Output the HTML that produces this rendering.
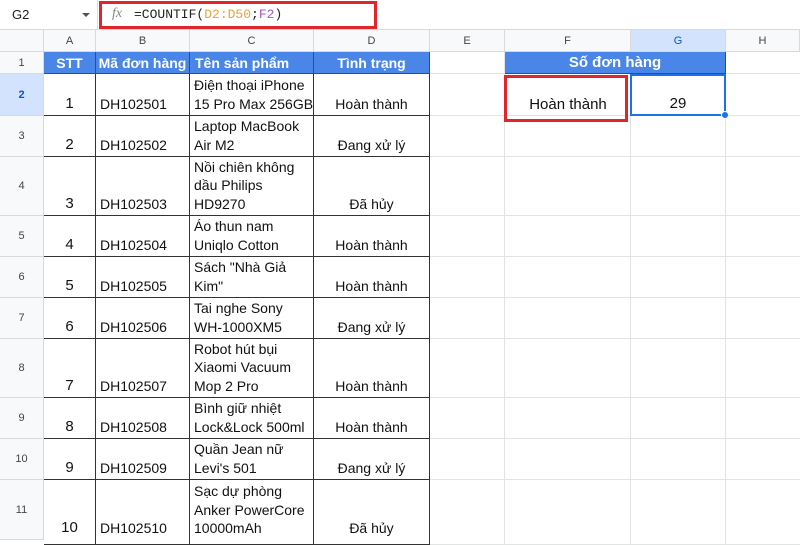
<!DOCTYPE html>
<html><head><meta charset="utf-8"><style>
*{margin:0;padding:0;box-sizing:border-box}
body{width:800px;height:533px;overflow:hidden;background:#fff;font-family:"Liberation Sans",sans-serif;position:relative}
.a{position:absolute}
.hd{position:absolute;background:#f8f9fa;color:#444;font-size:11px;display:flex;align-items:center;justify-content:center;border-right:1px solid #d9d9d9;border-bottom:1px solid #d9d9d9}
.c{position:absolute;font-size:14px;color:#111;display:flex;flex-direction:column;justify-content:flex-end;padding:0 4px 2px;line-height:18.5px;border-right:1px solid #333;border-bottom:1px solid #333;overflow:hidden;white-space:nowrap}
.ctr{align-items:center;text-align:center}
.g{position:absolute;border-right:1px solid #e2e3e3;border-bottom:1px solid #e2e3e3}
.h{position:absolute;background:#4a86e8;color:#fff;font-weight:bold;font-size:14px;display:flex;align-items:center;justify-content:center;border-right:1px solid #2a4f8a;border-bottom:1px solid #2a4f8a}
</style></head><body>
<div class="a" style="left:0;top:0;width:800px;height:30px;background:#fff;border-bottom:1px solid #d9d9d9"></div>
<div class="a" style="left:12px;top:7px;font-size:13px;color:#222">G2</div>
<div class="a" style="left:82px;top:13px;width:0;height:0;border-left:4px solid transparent;border-right:4px solid transparent;border-top:4px solid #555"></div>
<div class="a" style="left:97px;top:0px;width:1px;height:30px;background:#ddd"></div>
<div class="a" style="left:99px;top:1px;width:278px;height:28px;border:3px solid #e0262b"></div>
<div class="a" style="left:112px;top:6px;font-family:'Liberation Serif',serif;font-style:italic;font-size:14px;color:#888">fx</div>
<div class="a" style="left:134px;top:7px;font-family:'Liberation Mono',monospace;font-size:13px;color:#222">=COUNTIF(<span style="color:#e8a33a">D2:D50</span>;<span style="color:#a855c7">F2</span>)</div>
<div class="hd" style="left:0;top:30px;width:44px;height:22px;background:#f8f9fa"></div>
<div class="hd" style="left:44px;top:30px;width:52px;height:22px">A</div>
<div class="hd" style="left:96px;top:30px;width:94px;height:22px">B</div>
<div class="hd" style="left:190px;top:30px;width:124px;height:22px">C</div>
<div class="hd" style="left:314px;top:30px;width:116px;height:22px">D</div>
<div class="hd" style="left:430px;top:30px;width:75px;height:22px">E</div>
<div class="hd" style="left:505px;top:30px;width:126px;height:22px">F</div>
<div class="hd" style="left:631px;top:30px;width:95px;height:22px;background:#d3e3fd;color:#0b57d0">G</div>
<div class="hd" style="left:726px;top:30px;width:74px;height:22px">H</div>
<div class="hd" style="left:0;top:52px;width:44px;height:22px">1</div>
<div class="hd" style="left:0;top:74px;width:44px;height:42px;background:#d3e3fd;color:#0b57d0;font-weight:bold">2</div>
<div class="hd" style="left:0;top:116px;width:44px;height:41px">3</div>
<div class="hd" style="left:0;top:157px;width:44px;height:59px">4</div>
<div class="hd" style="left:0;top:216px;width:44px;height:41px">5</div>
<div class="hd" style="left:0;top:257px;width:44px;height:41px">6</div>
<div class="hd" style="left:0;top:298px;width:44px;height:41px">7</div>
<div class="hd" style="left:0;top:339px;width:44px;height:59px">8</div>
<div class="hd" style="left:0;top:398px;width:44px;height:41px">9</div>
<div class="hd" style="left:0;top:439px;width:44px;height:41px">10</div>
<div class="hd" style="left:0;top:480px;width:44px;height:60px">11</div>
<div id="grid"></div>
<script>
var rows=[52,74,116,157,216,257,298,339,398,439,480,545];
var cols=[[430,75],[505,126],[631,95],[726,80]];
var h='';
for(var i=0;i<rows.length-1;i++)for(var j=0;j<cols.length;j++){
h+='<div class="g" style="left:'+cols[j][0]+'px;top:'+rows[i]+'px;width:'+cols[j][1]+'px;height:'+(rows[i+1]-rows[i])+'px"></div>';}
document.getElementById('grid').innerHTML=h;
var data=[
["1","DH102501",["Điện thoại iPhone","15 Pro Max 256GB"],"Hoàn thành"],
["2","DH102502",["Laptop MacBook","Air M2"],"Đang xử lý"],
["3","DH102503",["Nồi chiên không","dầu Philips","HD9270"],"Đã hủy"],
["4","DH102504",["Áo thun nam","Uniqlo Cotton"],"Hoàn thành"],
["5","DH102505",["Sách \"Nhà Giả","Kim\""],"Hoàn thành"],
["6","DH102506",["Tai nghe Sony","WH-1000XM5"],"Đang xử lý"],
["7","DH102507",["Robot hút bụi","Xiaomi Vacuum","Mop 2 Pro"],"Hoàn thành"],
["8","DH102508",["Bình giữ nhiệt","Lock&Lock 500ml"],"Hoàn thành"],
["9","DH102509",["Quần Jean nữ","Levi's 501"],"Đang xử lý"],
["10","DH102510",["Sạc dự phòng","Anker PowerCore","10000mAh"],"Đã hủy"]];
var c2='';
for(var i=0;i<data.length;i++){
var t=rows[i+1],hh=rows[i+2]-t,d=data[i];
var ex=(i==9)?'padding-bottom:0;justify-content:flex-start;padding-top:2px;':'';
c2+='<div class="c ctr" style="'+ex+'left:44px;top:'+t+'px;width:52px;height:'+hh+'px;font-size:15px"><div>'+(i==9?'<br><br>':'')+d[0]+'</div></div>';
c2+='<div class="c" style="'+ex+'left:96px;top:'+t+'px;width:94px;height:'+hh+'px"><div>'+(i==9?'<br><br>':'')+d[1]+'</div></div>';
c2+='<div class="c" style="'+ex+'left:190px;top:'+t+'px;width:124px;height:'+hh+'px"><div>'+d[2].join('<br>')+'</div></div>';
c2+='<div class="c ctr" style="'+ex+'left:314px;top:'+t+'px;width:116px;height:'+hh+'px"><div>'+(i==9?'<br><br>':'')+d[3]+'</div></div>';}
document.getElementById('grid').innerHTML+=c2;
</script>
<div class="h" style="left:44px;top:52px;width:52px;height:22px">STT</div>
<div class="h" style="left:96px;top:52px;width:94px;height:22px">Mã đơn hàng</div>
<div class="h" style="left:190px;top:52px;width:124px;height:22px;justify-content:flex-start;padding-left:5px">Tên sản phẩm</div>
<div class="h" style="left:314px;top:52px;width:116px;height:22px">Tình trạng</div>
<div class="h" style="left:505px;top:52px;width:221px;height:22px;border-right:1px solid #2a4f8a;font-size:15px">Số đơn hàng</div>
<div class="a" style="left:505px;top:74px;width:126px;height:42px;font-size:15px;display:flex;align-items:flex-end;justify-content:center;padding-bottom:3px;color:#111">Hoàn thành</div>
<div class="a" style="left:504px;top:75px;width:124px;height:47px;border:3px solid #e0262b"></div>
<div class="a" style="left:630px;top:74px;width:96px;height:42px;border:2px solid #1a73e8;font-size:15px;display:flex;align-items:flex-end;justify-content:center;padding-bottom:2px;color:#111">29</div>
<div class="a" style="left:721px;top:111px;width:8px;height:8px;border-radius:50%;background:#1a73e8;border:1px solid #fff"></div>
</body></html>
